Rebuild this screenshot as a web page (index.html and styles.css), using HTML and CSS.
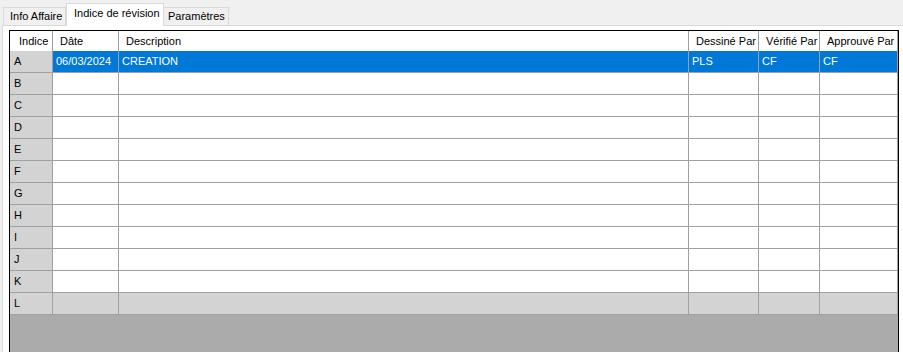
FILE: index.html
```html
<!DOCTYPE html>
<html lang="fr">
<head>
    <meta charset="UTF-8">
    <title>Indice de révision</title>
    <link rel="stylesheet" href="styles.css">
</head>
<body>
    <div class="tabstrip">
        <div class="tab">Info Affaire</div>
        <div class="tab active">Indice de révision</div>
        <div class="tab">Paramètres</div>
    </div>

    <div class="panel">
        <div class="grid">
            <table>
                <colgroup>
                    <col class="c-idx">
                    <col class="c-date">
                    <col class="c-desc">
                    <col class="c-des">
                    <col class="c-ver">
                    <col class="c-app">
                </colgroup>
                <thead>
                    <tr>
                        <th class="idx">Indice</th>
                        <th>Dâte</th>
                        <th>Description</th>
                        <th>Dessiné Par</th>
                        <th>Vérifié Par</th>
                        <th>Approuvé Par</th>
                    </tr>
                </thead>
                <tbody>
                    <tr class="selected">
                        <td class="idx">A</td>
                        <td>06/03/2024</td>
                        <td>CREATION</td>
                        <td>PLS</td>
                        <td>CF</td>
                        <td>CF</td>
                    </tr>
                    <tr><td class="idx">B</td><td></td><td></td><td></td><td></td><td></td></tr>
                    <tr><td class="idx">C</td><td></td><td></td><td></td><td></td><td></td></tr>
                    <tr><td class="idx">D</td><td></td><td></td><td></td><td></td><td></td></tr>
                    <tr><td class="idx">E</td><td></td><td></td><td></td><td></td><td></td></tr>
                    <tr><td class="idx">F</td><td></td><td></td><td></td><td></td><td></td></tr>
                    <tr><td class="idx">G</td><td></td><td></td><td></td><td></td><td></td></tr>
                    <tr><td class="idx">H</td><td></td><td></td><td></td><td></td><td></td></tr>
                    <tr><td class="idx">I</td><td></td><td></td><td></td><td></td><td></td></tr>
                    <tr><td class="idx">J</td><td></td><td></td><td></td><td></td><td></td></tr>
                    <tr><td class="idx">K</td><td></td><td></td><td></td><td></td><td></td></tr>
                    <tr class="disabled"><td class="idx">L</td><td></td><td></td><td></td><td></td><td></td></tr>
                </tbody>
            </table>
        </div>
    </div>
</body>
</html>
```

FILE: styles.css
```css
* {
    box-sizing: border-box;
    margin: 0;
    padding: 0;
}

body {
    background: #f0f0f0;
    font-family: "Liberation Sans", Arial, sans-serif;
    font-size: 11px;
    color: #000;
    height: 352px;
    overflow: hidden;
    display: flex;
    flex-direction: column;
}

/* Tabs */
.tabstrip {
    display: flex;
    align-items: flex-end;
    height: 25px;
    padding-left: 3px;
}

.tab {
    height: 18px;
    line-height: 17px;
    padding: 0 5px 0 6px;
    border: 1px solid #d9d9d9;
    border-bottom: none;
    background: #f0f0f0;
    white-space: nowrap;
}

.tab:first-child {
    width: 63px;
}

.tab:last-child {
    padding: 0 3px 0 4px;
    border-left: none;
}

.tab.active {
    width: 98px;
    height: 23px;
    line-height: 19px;
    padding-left: 7px;
    background: #fff;
    border-left: 1px solid #d9d9d9;
    margin-bottom: -1px;
    position: relative;
    z-index: 1;
}

/* Panel */
.panel {
    flex: 1;
    margin-left: 2px;
    margin-right: -4px;
    background: #fff;
    border: 1px solid #d9d9d9;
    border-bottom: none;
    padding: 4px 0 0 6px;
    display: flex;
}

.grid {
    width: 890px;
    background: #ababab;
    border: 1px solid #000;
    border-bottom: none;
}

table {
    border-collapse: separate;
    border-spacing: 0;
    table-layout: fixed;
    width: 888px;
}

.c-idx { width: 43px; }
.c-date { width: 66px; }
.c-desc { width: 570px; }
.c-des { width: 70px; }
.c-ver { width: 61px; }
.c-app { width: 78px; }

th {
    height: 20px;
    background: #fff;
    font-weight: normal;
    text-align: left;
    padding: 0 0 1px 7px;
    border-right: 1px solid #a0a0a0;
    white-space: nowrap;
    overflow: hidden;
}

th.idx {
    padding-left: 9px;
}

td {
    height: 22px;
    background: #fff;
    padding: 0 0 1px 3px;
    border-right: 1px solid #a0a0a0;
    border-bottom: 1px solid #a0a0a0;
    white-space: nowrap;
}

td.idx {
    background: #d3d3d3;
    padding-left: 4px;
}

tr.selected td {
    background: #0078d7;
    color: #fff;
}

tr.selected td.idx {
    background: #d3d3d3;
    color: #000;
}

tr.disabled td {
    background: #d3d3d3;
}
```
